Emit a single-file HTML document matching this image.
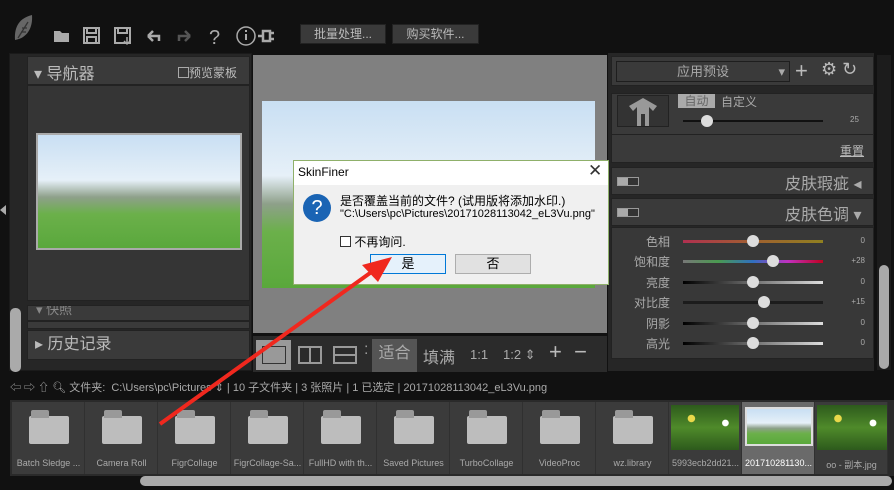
<!DOCTYPE html><html><head><meta charset="utf-8"><style>
*{margin:0;padding:0;box-sizing:border-box}
body{width:894px;height:490px;background:#111;position:relative;overflow:hidden;font-family:"Liberation Sans","Noto Sans CJK SC",sans-serif;color:#bbb}
.a{position:absolute}
.btn{background:#3a3a3a;border:1px solid #222;color:#bbb;font-size:12px;text-align:center;line-height:18px}
.hdr{background:#3a3a3a;border:1px solid #222}
.sl{position:absolute;left:683px;width:140px;height:3px}
.kn{position:absolute;width:12px;height:12px;border-radius:6px;background:#ddd;top:-5px}
.lb{position:absolute;right:224px;font-size:12px;color:#aaa;width:60px;text-align:right}
.vl{position:absolute;left:835px;font-size:8px;color:#aaa;width:30px;text-align:right}
.fi{position:absolute;top:402px;width:73px;height:72px;background:#3b3b3b;border-right:1px solid #303030}
.fo{position:absolute;left:17px;top:14px;width:40px;height:28px;background:#bdbdbd;border-radius:2px}
.fo:before{content:"";position:absolute;left:2px;top:-6px;width:18px;height:8px;background:#999;border-radius:2px 2px 0 0}
.fn{position:absolute;top:56px;left:0;width:73px;text-align:center;font-size:9px;color:#aaa;white-space:nowrap;overflow:hidden}
.ph{background:linear-gradient(#c9dff3 0%,#e6f0f8 40%,#8ea08a 55%,#6bb04a 70%,#5aa83c 100%)}
.gr{background:radial-gradient(circle at 30% 30%,#e9d84a 0 6%,transparent 7%),radial-gradient(circle at 80% 40%,#fff 0 5%,transparent 6%),linear-gradient(#2d5a1c,#4f8a2a,#2d5a1c)}
</style></head><body>
<svg class="a" style="left:12px;top:14px" width="24" height="30" viewBox="0 0 24 30"><path d="M20 1C8 4 2 12 3 26c12-2 18-12 17-25z" fill="#666"/><path d="M6 24L16 8M9 18h5M10 14h5" stroke="#333" stroke-width="1.3"/></svg>
<svg class="a" style="left:52px;top:25px" width="240" height="22" viewBox="0 0 240 22" fill="none" stroke="#aaa" stroke-width="2">
<path d="M2 6h6l2 2h7v9H2z" fill="#aaa" stroke="none"/>
<rect x="32" y="3" width="15" height="15"/><path d="M35 3v5h9V3M35 18v-6h9v6"/>
<rect x="63" y="3" width="15" height="15"/><path d="M66 3v5h9V3"/><path d="M75 12v7M72 16l3 3 3-3" stroke-width="1.5"/>
<path d="M96 11h11v5M96 11l5-5M96 11l5 5" stroke-width="2.5"/>
<path d="M138 11h-11v5M138 11l-5-5M138 11l-5 5" stroke="#555" stroke-width="2.5"/>
<text x="157" y="19" fill="#aaa" stroke="none" font-size="20" font-family="Liberation Sans">?</text>
<circle cx="194" cy="11" r="9" stroke-width="1.5"/><path d="M194 9v6M194 5v2" stroke-width="2"/>
<path d="M206 11h5M211 6h7v10h-7zM218 8h4M218 14h4" stroke-width="2.5"/></svg>
<div class="a btn" style="left:300px;top:24px;width:86px;height:20px">批量处理...</div>
<div class="a btn" style="left:392px;top:24px;width:87px;height:20px">购买软件...</div>
<div class="a" style="left:9px;top:53px;width:243px;height:318px;background:#262626;border:1px solid #1a1a1a"></div>
<div class="a" style="left:10px;top:308px;width:11px;height:64px;background:#aaa;border-radius:5px"></div>
<div class="a" style="left:0;top:205px;width:0;height:0;border:5px solid transparent;border-right:6px solid #aaa;border-left:0"></div>
<div class="a hdr" style="left:27px;top:56px;width:223px;height:29px"></div>
<div class="a" style="left:34px;top:60px;font-size:16px;color:#bbb">▾ 导航器</div>
<div class="a" style="left:178px;top:64px;font-size:12px;color:#bbb"><span style="display:inline-block;width:11px;height:11px;border:1px solid #aaa;vertical-align:-1px"></span>预览蒙板</div>
<div class="a" style="left:27px;top:85px;width:223px;height:216px;background:#353535;border:1px solid #222"></div>
<div class="a ph" style="left:36px;top:133px;width:206px;height:117px;border:2px solid #aaa"></div>
<div class="a hdr" style="left:27px;top:305px;width:223px;height:16px;overflow:hidden;font-size:13px;line-height:8px;padding-left:8px;color:#888">▾ 快照</div>
<div class="a hdr" style="left:27px;top:321px;width:223px;height:8px"></div>
<div class="a hdr" style="left:27px;top:330px;width:223px;height:30px;font-size:16px;line-height:28px;padding-left:7px">▸ 历史记录</div>
<div class="a" style="left:253px;top:55px;width:354px;height:278px;background:#808080"></div>
<div class="a ph" style="left:262px;top:101px;width:333px;height:187px"></div>
<div class="a" style="left:253px;top:336px;width:354px;height:36px;background:#2b2b2b"></div>
<div class="a" style="left:256px;top:340px;width:35px;height:30px;background:#999"></div>
<div class="a" style="left:262px;top:346px;width:24px;height:18px;border:1px solid #333"></div>
<div class="a" style="left:298px;top:346px;width:24px;height:18px;border:2px solid #999"><div style="position:absolute;left:9px;top:0;width:2px;height:14px;background:#999"></div></div>
<div class="a" style="left:333px;top:346px;width:24px;height:18px;border:2px solid #999"><div style="position:absolute;left:0;top:6px;width:20px;height:2px;background:#999"></div></div>
<div class="a" style="left:364px;top:341px;color:#999">:</div>
<div class="a" style="left:372px;top:339px;width:45px;height:33px;background:#555;color:#aaa;font-size:16px;text-align:center;line-height:30px">适合</div>
<div class="a" style="left:423px;top:344px;font-size:16px;color:#aaa">填满</div>
<div class="a" style="left:470px;top:347px;font-size:13px;color:#aaa">1:1</div>
<div class="a" style="left:503px;top:347px;font-size:13px;color:#aaa">1:2 ⇕</div>
<div class="a" style="left:549px;top:339px;font-size:22px;color:#bbb">+ &nbsp;−</div>
<div class="a" style="left:608px;top:53px;width:266px;height:318px;background:#262626"></div>
<div class="a" style="left:877px;top:55px;width:14px;height:315px;background:#1c1c1c"></div>
<div class="a" style="left:879px;top:265px;width:10px;height:104px;background:#aaa;border-radius:5px"></div>
<div class="a hdr" style="left:611px;top:56px;width:263px;height:30px"></div>
<div class="a" style="left:616px;top:61px;width:174px;height:21px;background:#3a3a3a;border:1px solid #1e1e1e;font-size:13px;text-align:center;line-height:19px;color:#aaa">应用预设<span style="position:absolute;right:4px">▾</span></div>
<div class="a" style="left:795px;top:58px;font-size:22px;color:#bbb">+</div>
<div class="a" style="left:821px;top:59px;font-size:18px;color:#bbb">⚙ ↻</div>
<div class="a hdr" style="left:611px;top:93px;width:263px;height:70px"></div>
<div class="a" style="left:617px;top:95px;width:52px;height:32px;border:1px solid #222;background:#333"><svg width="50" height="30" viewBox="0 0 50 30"><path d="M25 2l14 8-4 5-4-4v19h-4V18h-4v12h-4V11l-4 4-4-5z" fill="#999"/></svg></div>
<div class="a" style="left:678px;top:94px;width:37px;height:14px;background:#aaa;color:#666;font-size:12px;line-height:14px;text-align:center">自动</div>
<div class="a" style="left:721px;top:93px;font-size:12px;color:#aaa">自定义</div>
<div class="a" style="left:683px;top:120px;width:140px;height:2px;background:#111"><div class="kn" style="left:18px"></div></div>
<div class="a" style="left:850px;top:115px;font-size:8px;color:#aaa">25</div>
<div class="a" style="left:611px;top:134px;width:263px;height:1px;background:#222"></div>
<div class="a" style="left:840px;top:142px;font-size:12px;color:#bbb;text-decoration:underline">重置</div>
<div class="a hdr" style="left:611px;top:167px;width:263px;height:28px"></div>
<div class="a" style="left:617px;top:177px;width:22px;height:9px;border:1px solid #999;background:linear-gradient(90deg,#aaa 50%,#333 50%)"></div>
<div class="a" style="left:785px;top:170px;font-size:16px;color:#aaa">皮肤瑕疵 ◂</div>
<div class="a hdr" style="left:611px;top:198px;width:263px;height:28px"></div>
<div class="a" style="left:617px;top:208px;width:22px;height:9px;border:1px solid #999;background:linear-gradient(90deg,#aaa 50%,#333 50%)"></div>
<div class="a" style="left:785px;top:201px;font-size:16px;color:#aaa">皮肤色调 ▾</div>
<div class="a" style="left:611px;top:227px;width:263px;height:132px;background:#383838;border:1px solid #222"></div>
<div class="lb" style="top:233px">色相</div><div class="sl" style="top:240px;background:linear-gradient(90deg,#b03050,#a06030,#908020)"><div class="kn" style="left:64px"></div></div><div class="vl" style="top:236px">0</div>
<div class="lb" style="top:253px">饱和度</div><div class="sl" style="top:260px;background:linear-gradient(90deg,#777,#4a9a50,#3070c0,#c030c0,#c00020)"><div class="kn" style="left:84px"></div></div><div class="vl" style="top:256px">+28</div>
<div class="lb" style="top:274px">亮度</div><div class="sl" style="top:281px;background:linear-gradient(90deg,#000,#ddd)"><div class="kn" style="left:64px"></div></div><div class="vl" style="top:277px">0</div>
<div class="lb" style="top:294px">对比度</div><div class="sl" style="top:301px;background:#1c1c1c"><div class="kn" style="left:75px"></div></div><div class="vl" style="top:297px">+15</div>
<div class="lb" style="top:315px">阴影</div><div class="sl" style="top:322px;background:linear-gradient(90deg,#000,#ddd)"><div class="kn" style="left:64px"></div></div><div class="vl" style="top:318px">0</div>
<div class="lb" style="top:335px">高光</div><div class="sl" style="top:342px;background:linear-gradient(90deg,#000,#ddd)"><div class="kn" style="left:64px"></div></div><div class="vl" style="top:338px">0</div>
<div class="a" style="left:10px;top:379px;font-size:11px;color:#aaa;white-space:nowrap">⇦ ⇨ ⇧ 🔍︎ 文件夹: &nbsp;C:\Users\pc\Pictures ⇕ | 10 子文件夹 | 3 张照片 | 1 已选定 | 20171028113042_eL3Vu.png</div>
<div class="a" style="left:10px;top:400px;width:884px;height:76px;background:#2a2a2a"></div>
<div class="fi" style="left:12px"><div class="fo"></div><div class="fn">Batch Sledge ...</div></div>
<div class="fi" style="left:85px"><div class="fo"></div><div class="fn">Camera Roll</div></div>
<div class="fi" style="left:158px"><div class="fo"></div><div class="fn">FigrCollage</div></div>
<div class="fi" style="left:231px"><div class="fo"></div><div class="fn">FigrCollage-Sa...</div></div>
<div class="fi" style="left:304px"><div class="fo"></div><div class="fn">FullHD with th...</div></div>
<div class="fi" style="left:377px"><div class="fo"></div><div class="fn">Saved Pictures</div></div>
<div class="fi" style="left:450px"><div class="fo"></div><div class="fn">TurboCollage</div></div>
<div class="fi" style="left:523px"><div class="fo"></div><div class="fn">VideoProc</div></div>
<div class="fi" style="left:596px"><div class="fo"></div><div class="fn">wz.library</div></div>
<div class="fi" style="left:669px"><div class="gr a" style="left:2px;top:3px;width:68px;height:45px"></div><div class="fn">5993ecb2dd21...</div></div>
<div class="fi" style="left:742px;background:#6a6a6a"><div class="ph a" style="left:3px;top:5px;width:68px;height:39px;border:2px solid #ddd"></div><div class="fn" style="color:#fff">201710281130...</div></div>
<div class="fi" style="left:815px"><div class="gr a" style="left:2px;top:3px;width:70px;height:45px"></div><div class="fn">oo - 副本.jpg</div></div>
<div class="a" style="left:140px;top:476px;width:752px;height:10px;background:#aaa;border-radius:5px"></div>
<div class="a" style="left:293px;top:160px;width:316px;height:125px;background:#f0f0f0;border:1px solid #8fb06a"></div>
<div class="a" style="left:294px;top:161px;width:314px;height:24px;background:#fff"></div>
<div class="a" style="left:298px;top:165px;font-size:12px;color:#000">SkinFiner</div>
<div class="a" style="left:588px;top:161px;font-size:17px;color:#333">✕</div>
<div class="a" style="left:303px;top:194px;width:28px;height:28px;border-radius:14px;background:#1a64b4;color:#fff;font-size:20px;text-align:center;line-height:28px">?</div>
<div class="a" style="left:340px;top:192px;font-size:12px;color:#000">是否覆盖当前的文件? (试用版将添加水印.)</div>
<div class="a" style="left:340px;top:208px;font-size:11px;color:#000">"C:\Users\pc\Pictures\20171028113042_eL3Vu.png"</div>
<div class="a" style="left:340px;top:233px;font-size:12px;color:#000"><span style="display:inline-block;width:11px;height:11px;border:1px solid #333;background:#fff;vertical-align:-1px"></span> 不再询问.</div>
<div class="a" style="left:370px;top:254px;width:76px;height:20px;background:#e5f1fb;border:1px solid #0078d7;font-size:13px;color:#000;text-align:center;line-height:18px">是</div>
<div class="a" style="left:455px;top:254px;width:76px;height:20px;background:#e1e1e1;border:1px solid #adadad;font-size:13px;color:#000;text-align:center;line-height:18px">否</div>
<svg class="a" style="left:0;top:0" width="894" height="490"><path d="M160 424L377 268" stroke="#f0281e" stroke-width="4"/><path d="M392 257L362 265L378 282z" fill="#f0281e"/></svg>
</body></html>
